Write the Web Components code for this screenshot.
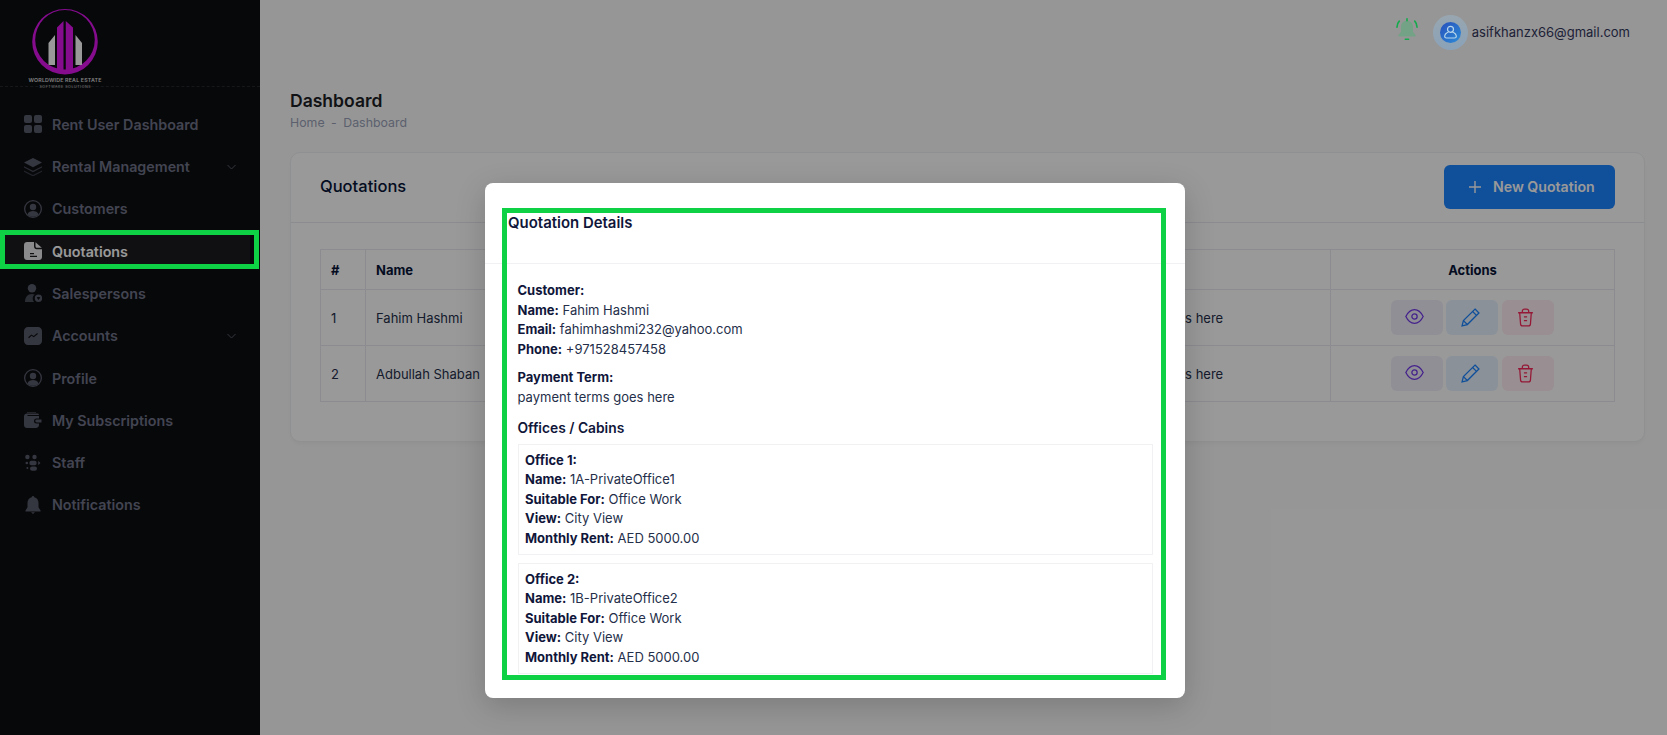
<!DOCTYPE html>
<html lang="en">
<head>
<meta charset="utf-8">
<title>Quotations</title>
<style>
  html, body { margin: 0; height: 100%; overflow: hidden; }
  body { font-family: Inter, "Liberation Sans", sans-serif; font-size: 13px; color: #071437; background: #fbfbfb; }
</style>
</head>
<body>
<app-shell></app-shell>

<script>
const ICONS = {
  dashboard: '<rect x="0" y="0" width="8" height="8" rx="2"/><rect x="10" y="0" width="8" height="8" rx="2"/><rect x="0" y="10" width="8" height="8" rx="2"/><rect x="10" y="10" width="8" height="8" rx="2"/>',
  layers: '<path d="M9 0 18 4.600 9 9.200 0 4.600Z"/><path d="M0 8.200 9 12.800 18 8.200V9.600L9 14.200 0 9.600Z" opacity=".75"/><path d="M0 12.400 9 17 18 12.400V13.800L9 18.400 0 13.800Z" opacity=".6"/>',
  user: '<path fill-rule="evenodd" d="M9 0a9 9 0 1 1 0 18A9 9 0 0 1 9 0Zm0 1.300a7.700 7.700 0 1 0 0 15.400A7.700 7.700 0 0 0 9 1.300Z"/><circle cx="9" cy="7" r="3.200"/><path d="M3.400 14.400C4.400 12 6.500 11 9 11s4.600 1 5.600 3.400A7.600 7.600 0 0 1 9 16.800a7.600 7.600 0 0 1-5.600-2.400Z"/>',
  doc: '<path fill-rule="evenodd" d="M3 0H10V4.500C10 6 11.200 7.200 12.700 7.200H18V15C18 16.700 16.700 18 15 18H3C1.300 18 0 16.700 0 15V3C0 1.300 1.300 0 3 0ZM6 11V12.200H10V11ZM6 13.800V15H13V13.800Z"/><path d="M11.500 .3 17.800 5.700H13C12.100 5.700 11.500 5.100 11.500 4.200Z"/>',
  seller: '<circle cx="8" cy="4.200" r="4.200"/><path d="M1 18C1 13.500 3.500 10 8 10c1 0 1.900.2 2.700.5A5 5 0 0 0 10 18Z" opacity=".8"/><path fill-rule="evenodd" d="M14.500 10.500a3.700 3.700 0 1 1 0 7.400 3.700 3.700 0 0 1 0-7.400Zm-1.800 3 1.800 2.400 1.800-2.400-1-.6h-1.600Z"/>',
  chart: '<path fill-rule="evenodd" d="M4 0H14C16.200 0 18 1.800 18 4V14C18 16.200 16.200 18 14 18H4C1.800 18 0 16.200 0 14V4C0 1.800 1.800 0 4 0ZM4.200 10.300 5 11.200 7.500 8.800 9.800 10.300 13.900 7 13.200 6.100 9.700 8.900 7.400 7.400Z"/>',
  wallet: '<path d="M3 2.500H13.500C14.300 2.500 15 3.100 15 4H3.500V5H15V7.500H12.500A2.500 2.500 0 0 0 12.500 12.500H15V14C15 15.600 13.600 17 12 17H3C1.300 17 0 15.700 0 14V5.500C0 3.800 1.300 2.500 3 2.500Z"/><path d="M12.700 8.600H17.500V11.400H12.700A1.400 1.400 0 0 1 12.700 8.600Z"/><path d="M3 1H12V2H3Z" opacity=".6"/>',
  staff: '<circle cx="3.400" cy="3" r="2.200"/><circle cx="10.500" cy="3" r="2.200"/><circle cx="2.800" cy="9" r="1.300"/><path d="M7.500 6.800H10.500A2.200 2.200 0 0 1 10.500 11.200H7.500A2.200 2.200 0 0 1 7.500 6.800Z"/><path d="M14.200 7 16.500 9 14.200 11Z"/><circle cx="3.400" cy="14" r="1"/><rect x="6" y="12.400" width="7" height="4.400" rx="2.200"/>',
  bell: '<path d="M9 0C9.700 0 10.300.6 10.300 1.300 13 2 14.500 4.300 14.500 7V11.200L16.500 14.600C16.700 15 16.500 15.500 16 15.500H2C1.500 15.500 1.300 15 1.500 14.600L3.500 11.200V7C3.500 4.300 5 2 7.700 1.300 7.700.6 8.300 0 9 0Z"/><path d="M7 16.200H11L9 18Z"/>'
};

class NavItem extends HTMLElement {
  connectedCallback() {
    const hasSub = this.hasAttribute('sub');
    this.attachShadow({ mode: 'open' });
    this.shadowRoot.innerHTML = `
      <style>
        :host {
          display: flex;
          align-items: center;
          height: 34px;
          margin: 0 10px 8.300px 0;
          padding: 0 14px 0 24px;
          font-size: 14.300px;
          font-weight: 600;
          color: #6f7388;
        }
        :host([active]) {
          background: #1c1c21;
          color: #fff;
        }
        svg.icon {
          width: 18px;
          height: 18px;
          margin-right: 10px;
          fill: #585b6b;
          flex: none;
        }
        :host([active]) svg.icon { fill: #e6e6ea; }
        .label { flex: 1; }
        .chev {
          width: 9px;
          height: 6px;
          fill: none;
          stroke: #565a6b;
          stroke-width: 1;
        }
      </style>
      <svg class="icon" viewBox="0 0 18 18">${ICONS[this.getAttribute('icon')]}</svg>
      <span class="label"><slot></slot></span>
      ${hasSub ? '<svg class="chev" viewBox="0 0 9 6"><path d="M.5 1 4.500 5 8.500 1"/></svg>' : ''}
    `;
  }
}

class SideNav extends HTMLElement {
  connectedCallback() {
    this.attachShadow({ mode: 'open' });
    this.shadowRoot.innerHTML = `
      <style>
        :host {
          display: block;
          width: 260px;
          flex: none;
          background: #0d0e12;
          overflow: hidden;
        }
        .logo {
          height: 86px;
          border-bottom: 1px dashed #26272e;
        }
        .logo svg { display: block; overflow: visible; }
        .logo text { font-family: Inter, "Liberation Sans", sans-serif; }
        nav { padding-top: 20.300px; }
      </style>
      <div class="logo">
        <svg width="130" height="86" viewBox="0 0 130 86">
          <path fill="#dc14ec" fill-rule="evenodd" d="M65 9a32.800 32.800 0 1 1 0 65.600A32.800 32.800 0 0 1 65 9Zm0 1a29.800 29.800 0 1 0 0 59.600A29.800 29.800 0 0 0 65 10Z"/>
          <path fill="#dc14ec" d="M63.500 21V70H57V27.500ZM65.800 21 73 27.500V70H65.800Z"/>
          <path fill="#ffffff" d="M48.500 43 55 35V65H48.500ZM75.500 35 82 43V65H75.500Z"/>
          <text x="65" y="82" text-anchor="middle" font-size="5.300" font-weight="600" fill="#d8d8d8" textLength="73">WORLDWIDE REAL ESTATE</text>
          <text x="65" y="87.500" text-anchor="middle" font-size="3.600" fill="#cfcfcf" textLength="51">SOFTWARE SOLUTIONS</text>
        </svg>
      </div>
      <nav>
        <nav-item icon="dashboard">Rent User Dashboard</nav-item>
        <nav-item icon="layers" sub>Rental Management</nav-item>
        <nav-item icon="user">Customers</nav-item>
        <nav-item icon="doc" active>Quotations</nav-item>
        <nav-item icon="seller">Salespersons</nav-item>
        <nav-item icon="chart" sub>Accounts</nav-item>
        <nav-item icon="user">Profile</nav-item>
        <nav-item icon="wallet">My Subscriptions</nav-item>
        <nav-item icon="staff">Staff</nav-item>
        <nav-item icon="bell">Notifications</nav-item>
      </nav>
    `;
  }
}

// sits above the modal backdrop, so its colours are not dimmed
class TopBar extends HTMLElement {
  connectedCallback() {
    this.attachShadow({ mode: 'open' });
    this.shadowRoot.innerHTML = `
      <style>
        :host {
          display: flex;
          position: relative;
          z-index: 1;
          justify-content: flex-end;
          align-items: center;
          height: 64px;
          padding-right: 15px;
          font-size: 13px;
          color: #1c2136;
        }
        .bell { width: 24px; height: 24px; margin: -4px 14px 0 0; }
        .avatar {
          width: 35px;
          height: 35px;
          border-radius: 50%;
          background: linear-gradient(#98a6b0, #8aa2b8);
          display: flex;
          align-items: center;
          justify-content: center;
          margin-right: 4px;
        }
        .avatar svg { width: 21px; height: 21px; display: block; }
      </style>
      <svg class="bell" viewBox="0 0 22 22">
        <path fill="#74a286" d="M11 2.500C15 2.500 16.500 5.500 16.500 8.500V12.500L18.800 15.500C19.200 16.200 18.800 17 18 17H4C3.200 17 2.800 16.200 3.200 15.500L5.500 12.500V8.500C5.500 5.500 7 2.500 11 2.500Z"/>
        <g fill="none" stroke="#13ab4c" stroke-width="1.500" stroke-linecap="round">
          <path d="M11 .8V2.500M1.800 8.500C1.800 6.300 2.500 4.300 3.900 2.900M20.200 8.500C20.200 6.300 19.500 4.300 18.100 2.900M9.500 19.500H12.500"/>
        </g>
      </svg>
      <div class="avatar">
        <svg viewBox="0 0 21 21">
          <defs><linearGradient id="av" x1="0" y1="0" x2="1" y2="1"><stop offset="0" stop-color="#2850bc"/><stop offset="1" stop-color="#2d8cd7"/></linearGradient></defs>
          <circle cx="10.500" cy="10.500" r="10.500" fill="url(#av)"/>
          <g fill="none" stroke="#b9d7eb" stroke-width="1.200">
            <circle cx="10.500" cy="7.300" r="3"/>
            <path d="M8.500 10C6 11 4.700 12.700 4.700 14.500C4.700 15.500 5.500 16 6.500 16H14.500C15.500 16 16.300 15.500 16.300 14.500C16.300 12.700 15 11 12.500 10"/>
          </g>
        </svg>
      </div>
      <span><slot></slot></span>
    `;
  }
}

class PageTitle extends HTMLElement {
  connectedCallback() {
    this.attachShadow({ mode: 'open' });
    this.shadowRoot.innerHTML = `
      <style>
        :host { display: block; padding-top: 26px; height: 62px; }
        h1 {
          margin: 0;
          font-size: 17.550px;
          line-height: 21px;
          font-weight: 600;
          color: #1c1e26;
        }
        .crumbs {
          display: flex;
          gap: 6.500px;
          margin-top: 4px;
          font-size: 12.350px;
          line-height: 15px;
          color: #99a1b7;
        }
      </style>
      <h1>${this.getAttribute('heading')}</h1>
      <div class="crumbs"><span>Home</span><span>-</span><span>${this.getAttribute('heading')}</span></div>
    `;
  }
}

class ActionBtn extends HTMLElement {
  connectedCallback() {
    const kinds = {
      view: { bg: '#f2eefa', fg: '#7239ea', shift: 5.4, svg: '<path d="M.8 8C3 3.500 6 1.500 9 1.500S15 3.500 17.200 8C15 12.500 12 14.500 9 14.500S3 12.500 .8 8Z"/><circle cx="9" cy="8" r="2.500"/>' },
      edit: { bg: '#e6f2ff', fg: '#1b84ff', shift: 2.6, svg: '<path d="M13.300 1 17 4.700 6 15.700 1 17 2.300 12Z"/><path d="M11 3.300 14.700 7M2.300 12 6 15.700"/>' },
      del: { bg: '#ffeef3', fg: '#f8285a', shift: 4.6, svg: '<path d="M2 4.500H16M3.500 4.500 4.300 15C4.400 16.200 5.200 17 6.300 17H11.700C12.800 17 13.600 16.200 13.700 15L14.500 4.500M6 4.500V3C6 1.900 6.900 1 8 1H10C11.100 1 12 1.900 12 3V4.500M7.500 8.500H10.500M7.500 12H10.500"/>' }
    };
    const k = kinds[this.getAttribute('kind')];
    this.attachShadow({ mode: 'open' });
    this.shadowRoot.innerHTML = `
      <style>
        :host {
          display: inline-flex;
          align-items: center;
          justify-content: center;
          width: 52px;
          height: 35px;
          border-radius: 6px;
          background: ${k.bg};
        }
        svg {
          width: 19px;
          height: 19px;
          fill: none;
          stroke: ${k.fg};
          stroke-width: 1.200;
          margin-right: ${k.shift}px;
        }
      </style>
      <svg viewBox="0 0 18 18">${k.svg}</svg>
    `;
  }
}

class QuotationCard extends HTMLElement {
  connectedCallback() {
    const rows = [
      ['1', 'Fahim Hashmi', 'payment terms goes here'],
      ['2', 'Adbullah Shaban', 'payment terms goes here']
    ];
    this.attachShadow({ mode: 'open' });
    this.shadowRoot.innerHTML = `
      <style>
        :host {
          display: block;
          background: #fff;
          border: 1px solid #eef0f4;
          border-radius: 10px;
          box-shadow: 0 3px 4px rgba(0,0,0,.03);
          color: #252f4a;
        }
        header {
          display: flex;
          align-items: center;
          justify-content: space-between;
          height: 69px;
          padding: 0 29px;
          border-bottom: 1px solid #e8eaf0;
        }
        h3 { margin: 0 0 4px; font-size: 16.500px; font-weight: 500; color: #071437; }
        .add {
          display: flex;
          align-items: center;
          gap: 12px;
          height: 44px;
          width: 171px;
          margin-bottom: 2px;
          box-sizing: border-box;
          padding-left: 25px;
          border-radius: 6px;
          background: #1b84ff;
          color: #fff;
          font-size: 14.150px;
          font-weight: 600;
        }
        .add svg { width: 12px; height: 12px; stroke: #fff; stroke-width: 1.400; }
        .body { padding: 26px 29px 39px; }
        table {
          width: 100%;
          table-layout: fixed;
          border-collapse: collapse;
          font-size: 13px;
        }
        th, td {
          border: 1px solid #e9eaf0;
          padding: 0 10px;
          text-align: left;
          font-weight: 400;
        }
        th { height: 39px; font-weight: 700; color: #071437; }
        td { height: 55px; }
        th.act, td.act { text-align: center; }
        td.act { font-size: 0; }
        action-btn { margin-right: 4px; }
        action-btn:first-child { margin-right: 3px; }
        action-btn:last-child { margin-right: 0; }
      </style>
      <header>
        <h3>${this.getAttribute('heading')}</h3>
        <div class="add">
          <svg viewBox="0 0 12 12"><path d="M6 0V12M0 6H12"/></svg>
          <span>New Quotation</span>
        </div>
      </header>
      <div class="body">
        <table>
          <colgroup><col style="width:45px"><col style="width:400px"><col><col style="width:284px"></colgroup>
          <thead><tr><th>#</th><th>Name</th><th style="padding-left:250px">Payment Terms</th><th class="act">Actions</th></tr></thead>
          <tbody>
            ${rows.map(r => `<tr><td>${r[0]}</td><td>${r[1]}</td><td style="padding-left:300px">${r[2]}</td><td class="act"><action-btn kind="view"></action-btn><action-btn kind="edit"></action-btn><action-btn kind="del"></action-btn></td></tr>`).join('')}
          </tbody>
        </table>
      </div>
    `;
  }
}

class OfficeCard extends HTMLElement {
  connectedCallback() {
    this.attachShadow({ mode: 'open' });
    this.shadowRoot.innerHTML = `
      <style>
        :host {
          display: block;
          border: 1px solid #f1f1f4;
          padding: 6px 6.500px 5.500px;
          margin-bottom: 8px;
          line-height: 19.500px;
          color: #252f4a;
        }
        b { font-weight: 700; color: #10163a; }
      </style>
      <div><b>Office ${this.getAttribute('no')}:</b></div>
      <div><b>Name:</b> ${this.getAttribute('name')}</div>
      <div><b>Suitable For:</b> Office Work</div>
      <div><b>View:</b> City View</div>
      <div><b>Monthly Rent:</b> AED 5000.00</div>
    `;
  }
}

class QuotationModal extends HTMLElement {
  connectedCallback() {
    this.attachShadow({ mode: 'open' });
    this.shadowRoot.innerHTML = `
      <style>
        :host {
          position: absolute;
          left: 485px;
          top: 183px;
          width: 700px;
          height: 515px;
          background: #fff;
          border-radius: 8px;
          box-shadow: 0 8px 30px rgba(0,0,0,.18);
          font-size: 13px;
          color: #252f4a;
          overflow: hidden;
        }
        header {
          height: 81px;
          box-sizing: border-box;
          padding: 30px 0 0 23px;
          border-bottom: 1px solid #f1f1f4;
        }
        h5 { margin: 0; font-size: 14.950px; line-height: 21px; font-weight: 600; color: #10163a; }
        .body {
          height: 410px;
          box-sizing: border-box;
          padding: 17px 32px 0 32.500px;
          overflow: hidden;
          line-height: 19.500px;
        }
        p { margin: 0 0 9px; }
        b { font-weight: 700; color: #10163a; }
        h6 { margin: 11px 0 4.500px; font-size: 13.800px; line-height: 21px; font-weight: 600; color: #10163a; }
      </style>
      <header><h5>Quotation Details</h5></header>
      <div class="body">
        <p><b>Customer:</b><br>
          <b>Name:</b> Fahim Hashmi<br>
          <b>Email:</b> fahimhashmi232@yahoo.com<br>
          <b>Phone:</b> +971528457458</p>
        <p><b>Payment Term:</b><br>payment terms goes here</p>
        <h6>Offices / Cabins</h6>
        <office-card no="1" name="1A-PrivateOffice1"></office-card>
        <office-card no="2" name="1B-PrivateOffice2"></office-card>
      </div>
    `;
  }
}

// green marker rectangles drawn on top of the screenshot
class MarkBox extends HTMLElement {
  connectedCallback() {
    this.attachShadow({ mode: 'open' });
    this.shadowRoot.innerHTML = `
      <style>
        :host {
          position: absolute;
          box-sizing: border-box;
          border: 5px solid #0ed145;
          pointer-events: none;
        }
      </style>
    `;
  }
}

class AppShell extends HTMLElement {
  connectedCallback() {
    this.attachShadow({ mode: 'open' });
    this.shadowRoot.innerHTML = `
      <style>
        :host {
          display: flex;
          position: relative;
          width: 1667px;
          height: 735px;
          overflow: hidden;
        }
        main {
          flex: 1;
          min-width: 0;
          padding: 0 22px 0 30px;
        }
        .backdrop {
          position: absolute;
          inset: 0;
          background: rgba(0,0,0,.4);
        }
      </style>
      <side-nav></side-nav>
      <main>
        <top-bar>asifkhanzx66@gmail.com</top-bar>
        <page-title heading="Dashboard"></page-title>
        <quotation-card heading="Quotations"></quotation-card>
      </main>
      <div class="backdrop"></div>
      <quotation-modal></quotation-modal>
      <mark-box style="left:0;top:230px;width:259px;height:39px"></mark-box>
      <mark-box style="left:502px;top:208px;width:664px;height:472px"></mark-box>
    `;
  }
}

customElements.define('nav-item', NavItem);
customElements.define('side-nav', SideNav);
customElements.define('top-bar', TopBar);
customElements.define('page-title', PageTitle);
customElements.define('action-btn', ActionBtn);
customElements.define('quotation-card', QuotationCard);
customElements.define('office-card', OfficeCard);
customElements.define('quotation-modal', QuotationModal);
customElements.define('mark-box', MarkBox);
customElements.define('app-shell', AppShell);
</script>
</body>
</html>
